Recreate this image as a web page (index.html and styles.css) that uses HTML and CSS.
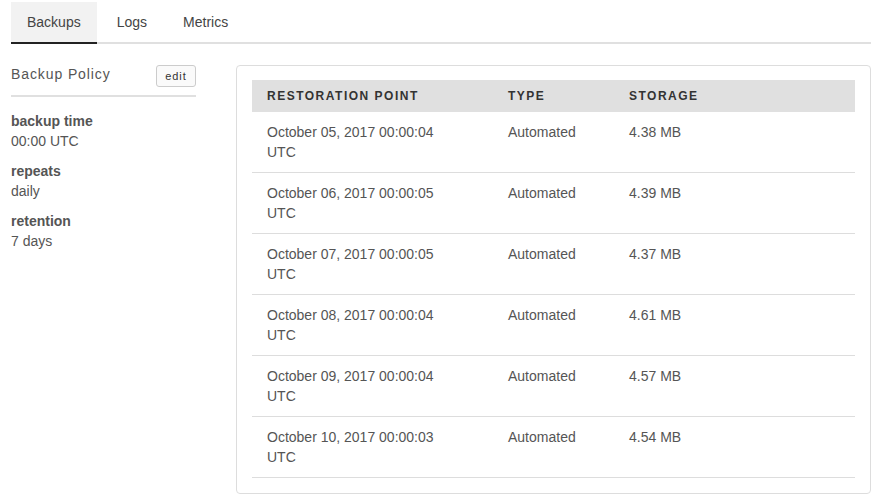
FILE: index.html
```html
<!DOCTYPE html>
<html>
<head>
<meta charset="utf-8">
<link rel="stylesheet" href="styles.css">
</head>
<body>
<div class="page">
  <nav class="tabs">
    <div class="tab active">Backups</div>
    <div class="tab">Logs</div>
    <div class="tab">Metrics</div>
  </nav>
  <div class="content">
    <aside class="policy">
      <div class="policy-head">
        <span class="policy-title">Backup Policy</span>
        <button class="edit">edit</button>
      </div>
      <dl class="fields">
        <dt>backup time</dt><dd>00:00 UTC</dd>
        <dt>repeats</dt><dd>daily</dd>
        <dt>retention</dt><dd>7 days</dd>
      </dl>
    </aside>
    <section class="card">
      <table class="points">
        <colgroup>
          <col class="w1">
          <col class="w2">
          <col>
        </colgroup>
        <thead>
          <tr><th>Restoration Point</th><th>Type</th><th>Storage</th></tr>
        </thead>
        <tbody>
          <tr><td class="c1">October 05, 2017 00:00:04 UTC</td><td>Automated</td><td>4.38 MB</td></tr>
          <tr><td class="c1">October 06, 2017 00:00:05 UTC</td><td>Automated</td><td>4.39 MB</td></tr>
          <tr><td class="c1">October 07, 2017 00:00:05 UTC</td><td>Automated</td><td>4.37 MB</td></tr>
          <tr><td class="c1">October 08, 2017 00:00:04 UTC</td><td>Automated</td><td>4.61 MB</td></tr>
          <tr><td class="c1">October 09, 2017 00:00:04 UTC</td><td>Automated</td><td>4.57 MB</td></tr>
          <tr><td class="c1">October 10, 2017 00:00:03 UTC</td><td>Automated</td><td>4.54 MB</td></tr>
        </tbody>
      </table>
    </section>
  </div>
</div>
</body>
</html>
```

FILE: styles.css
```css
* { box-sizing: border-box; }
html, body { margin: 0; background: #fff; }
body {
  font-family: "Liberation Sans", Arial, Helvetica, sans-serif;
  font-size: 14px;
  color: #555;
}
.page {
  padding: 2px 17px 0 11px;
}
.tabs {
  display: flex;
  gap: 4px;
  border-bottom: 2px solid #e0e0e0;
}
.tab {
  padding: 0 16px;
  height: 42px;
  line-height: 40px;
  color: #444;
  margin-bottom: -2px;
  border-bottom: 2px solid transparent;
}
.tab.active {
  background: #f2f2f2;
  border-bottom-color: #222;
}
.content {
  display: flex;
  align-items: flex-start;
  margin-top: 21px;
  gap: 40px;
}
.policy {
  width: 185px;
  flex: none;
}
.policy-head {
  display: flex;
  justify-content: space-between;
  align-items: center;
  box-sizing: content-box;
  height: 22px;
  padding-bottom: 8px;
  border-bottom: 2px solid #e0e0e0;
}
.policy-title {
  font-size: 14px;
  letter-spacing: 0.9px;
  color: #555;
  margin-top: -4px;
}
.edit {
  font-family: "Liberation Sans", Arial, sans-serif;
  font-size: 11px;
  letter-spacing: 1px;
  color: #333;
  background: #fafafa;
  border: 1px solid #ccc;
  border-radius: 3px;
  height: 22px;
  width: 40px;
  padding: 0;
  margin: 0;
}
.fields {
  margin: 14px 0 0 0;
}
.fields dt {
  font-weight: bold;
  line-height: 20px;
  color: #555;
}
.fields dd {
  margin: 0 0 10px 0;
  line-height: 20px;
}
.card {
  flex: 1;
  border: 1px solid #ddd;
  border-radius: 4px;
  padding: 14px 15px 15px 15px;
}
.points {
  width: 100%;
  border-collapse: collapse;
  table-layout: fixed;
}
.points .w1 { width: 241px; }
.points .w2 { width: 121px; }
.points th {
  background: #e0e0e0;
  text-align: left;
  font-size: 12px;
  font-weight: bold;
  letter-spacing: 1.5px;
  text-transform: uppercase;
  color: #333;
  height: 32px;
  padding: 0 15px 1px 15px;
}
.points td {
  vertical-align: top;
  line-height: 20px;
  padding: 10px 15px;
  border-bottom: 1px solid #ddd;
  color: #555;
}
.points td.c1 {
  padding-right: 30px;
}
```
